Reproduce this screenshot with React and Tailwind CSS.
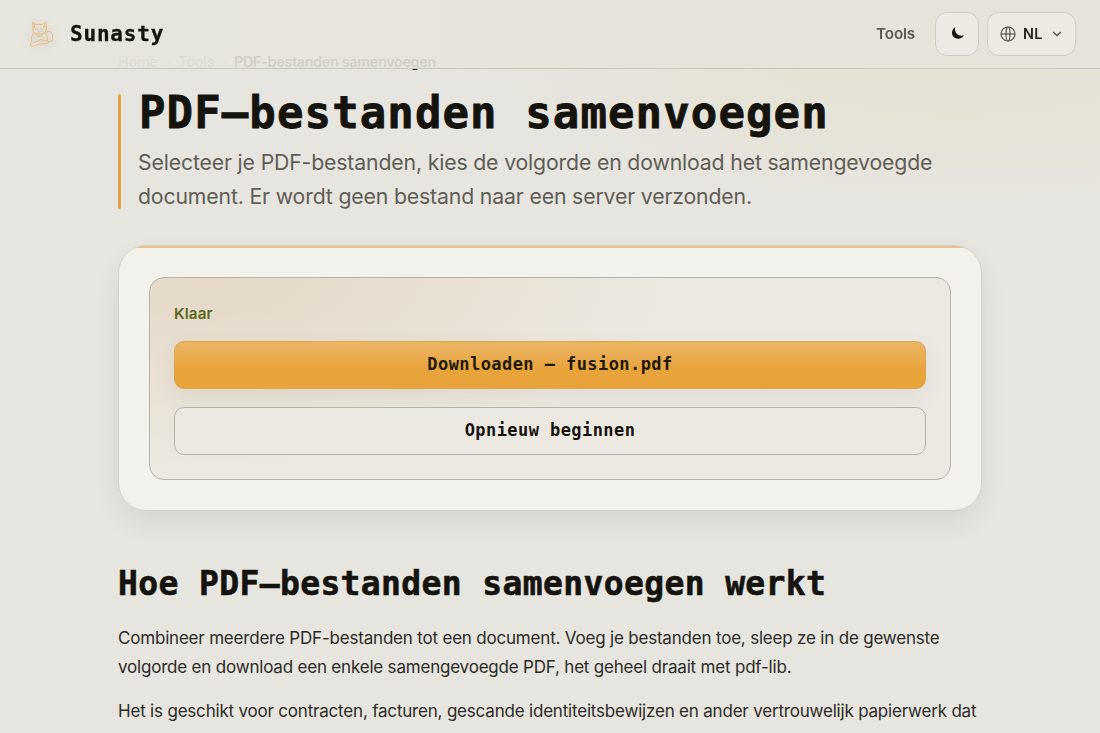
import { useState } from "react";
import { ChevronDown } from "lucide-react";

const paragraphs = [
  "Combineer meerdere PDF-bestanden tot een document. Voeg je bestanden toe, sleep ze in de gewenste volgorde en download een enkele samengevoegde PDF, het geheel draait met pdf-lib.",
  "Het is geschikt voor contracten, facturen, gescande identiteitsbewijzen en ander vertrouwelijk papierwerk dat lokaal moet worden samengevoegd zonder upload.",
];

function CatLogo() {
  return (
    <svg
      viewBox="0 0 28 28"
      className="h-7 w-7 drop-shadow-[0_2px_5px_rgba(60,55,40,0.18)]"
      fill="none"
      stroke="#ebb97c"
      strokeWidth="1"
      strokeLinecap="round"
      strokeLinejoin="round"
    >
      <path d="M6 10 5.7 2 9 4.7q2.8-1 5.6 0L18.9 2l.4 8q-1.2 4.2-6.7 4.4Q7 14 6 10Z" />
      <path d="m7.2 4.500.3 3.100M17.400 4.500l-.6 3M8.500 9.200h1.800M14 9.200h1.800M11.300 11.400l1 .8 1-.8" />
      <path d="M6.6 12.7q-3 4.3-1.8 8.7L3.4 24q0 2.4 2.5 2.3l6.5-2.2 8.1-.6q2.2-.9.5-2.5l-7.5-1.2-7.2 3" />
      <path d="M17.8 13q3.2 2.8 2.7 7.7M8.5 14.5q1.4 3.2 6.8 1.2" />
      <path d="M19 12.4q4.2-2.4 5.4.6 1.8 2.2 1 4.5 1.5 2.2-.8 3.7l-3.2.5" />
    </svg>
  );
}

function MoonIcon() {
  return (
    <svg viewBox="0 0 14 14" className="relative -top-px left-px h-[14px] w-[14px]" fill="#191914">
      <path d="M4.2 1.2C.2 3.4-.1 8.900 3.300 11.500c3.400 2.400 7.900 1.300 9.700-2.200C7.800 11 3 7.300 4.200 1.200Z" />
    </svg>
  );
}

function GlobeIcon() {
  return (
    <svg viewBox="0 0 16 16" className="h-4 w-4" fill="none" stroke="#55544d" strokeWidth="1.2">
      <circle cx="8" cy="8" r="7" />
      <ellipse cx="8" cy="8" rx="2" ry="7" />
      <path d="M1 8h14" />
    </svg>
  );
}

function Header() {
  const [dark, setDark] = useState(false);

  return (
    <header className="fixed inset-x-0 top-0 z-10 flex h-[69px] items-center justify-between border-b border-[#c9c8bf] bg-linear-to-r from-[#e7e6df]/90 via-[#e6e4da]/90 to-[#e6e4dd]/90 pr-6 pl-[27px]">
      <a href="#" className="flex items-center gap-[15px]">
        <CatLogo />
        <span className="font-['DejaVu_Sans_Mono',monospace] text-[21px] leading-7 font-bold tracking-[0.8px] text-[#14130e] [-webkit-text-stroke:0.3px]">
          Sunasty
        </span>
      </a>
      <nav className="flex items-center gap-2">
        <a href="#" className="mr-3 text-[15.2px] font-semibold tracking-[-0.15px] text-[#5b5a51]">
          Tools
        </a>
        <button
          onClick={() => setDark(!dark)}
          aria-label="Thema"
          className="flex h-11 w-11 items-center justify-center rounded-xl border border-[#cfcdc3] bg-[#edeae3]"
        >
          <MoonIcon />
        </button>
        <button className="flex h-11 w-[89px] items-center rounded-xl border border-[#cfcdc3] bg-[#edeae3] pl-3 text-[#24231e]">
          <GlobeIcon />
          <span className="ml-[7px] text-[14.4px] font-semibold tracking-[0.3px]">NL</span>
          <ChevronDown className="ml-[7px] h-[14px] w-[14px] text-[#4a4942]" strokeWidth={2} />
        </button>
      </nav>
    </header>
  );
}

export default function App() {
  return (
    <div className="h-[733px] overflow-hidden bg-[#e6e5e0] bg-[radial-gradient(ellipse_520px_170px_at_960px_50px,#e6e1d3_0%,#e6e3d8_50%,transparent_100%)] font-[Inter,sans-serif] text-[#2c2b27]">
      <Header />
      <main className="mx-auto w-[864px] pt-[51px]">
        <nav className="flex h-[22px] items-center text-[14.4px] tracking-[-0.2px] text-[#6d6b62]/80">
          <span>Home</span>
          <span className="w-[21px] text-center opacity-40">›</span>
          <span>Tools</span>
          <span className="w-5 text-center opacity-40">›</span>
          <span className="font-semibold tracking-[-0.34px] text-[#14130e]">PDF-bestanden samenvoegen</span>
        </nav>

        <section className="mt-[21px] flex h-[115px] gap-[17px]">
          <div className="h-[115px] w-[3px] shrink-0 rounded-full bg-[#e0a243]" />
          <div>
            <h1 className="pt-px pl-px font-['DejaVu_Sans_Mono',monospace] text-[44px] leading-[36px] font-bold tracking-[1.1px] whitespace-nowrap text-[#14130e] [-webkit-text-stroke:0.8px]">
              PDF–bestanden samenvoegen
            </h1>
            <p className="mt-[14px] w-[820px] text-[21.25px] leading-[34px] tracking-[-0.16px] text-[#5f5d56]">
              Selecteer je PDF-bestanden, kies de volgorde en download het samengevoegde document. Er
              wordt geen bestand naar een server verzonden.
            </p>
          </div>
        </section>

        <section className="mt-9 h-[266px] rounded-[28px] shadow-[0_12px_28px_-4px_rgba(50,50,35,0.11)]">
          <div className="h-full rounded-[28px] border border-[#d2d1ca] bg-[#f2f1ec] bg-linear-to-b from-[#eac188] from-[2px] to-[#f2f1ec] to-[2px] px-[30px] pt-[31px]">
            <div className="h-[203px] rounded-[15px] border border-[#b5b2a8] bg-[#ece9e2] bg-[radial-gradient(ellipse_460px_190px_at_60px_0px,#e5d8c7_0%,#e8e0d2_50%,transparent_100%)] px-6 pt-6">
              <p className="text-[15.2px] leading-6 font-semibold tracking-[0.1px] text-[#5b671b]">Klaar</p>
              <button className="mt-[15px] flex h-12 w-full items-center justify-center rounded-[10px] border border-[#dba44e] bg-linear-to-b from-[#ecb564] to-[#e8a33b] to-60% pb-px font-['DejaVu_Sans_Mono',monospace] text-[17px] font-bold tracking-[0.43px] text-[#211907] shadow-[0_8px_22px_rgba(80,75,45,0.08)]">
                Downloaden — fusion.pdf
              </button>
              <button className="mt-[18px] flex h-12 w-full items-center justify-center rounded-[10px] border border-[#b5b2a8] bg-[#ece9e2] pb-px font-['DejaVu_Sans_Mono',monospace] text-[17px] font-bold tracking-[0.43px] text-[#14130e]">
                Opnieuw beginnen
              </button>
            </div>
          </div>
        </section>

        <section className="mt-[53px]">
          <h2 className="mb-5 font-['DejaVu_Sans_Mono',monospace] text-[33px] leading-10 font-bold tracking-[0.37px] whitespace-nowrap text-[#14130e] [-webkit-text-stroke:0.6px]">
            Hoe PDF–bestanden samenvoegen werkt
          </h2>
          {paragraphs.map((text, i) => (
            <p key={i} className="mb-[15px] text-[17px] leading-[29px] tracking-[-0.195px]">
              {text}
            </p>
          ))}
        </section>
      </main>
    </div>
  );
}
